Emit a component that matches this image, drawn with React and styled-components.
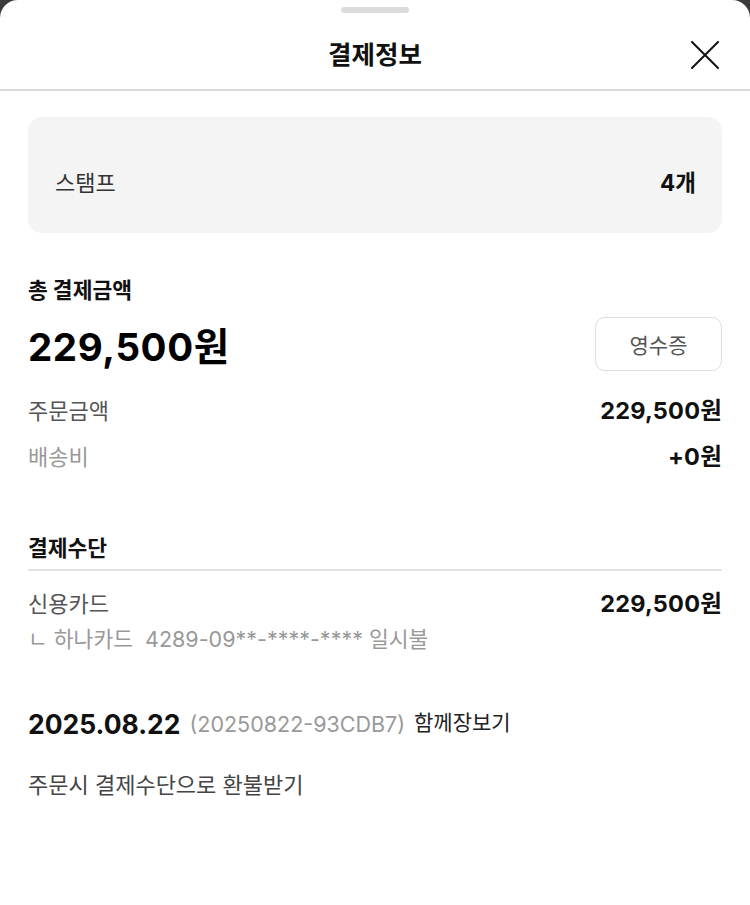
import React from "react";
import styled, { createGlobalStyle } from "styled-components";

const GlobalStyle = createGlobalStyle`
  html, body {
    margin: 0;
    padding: 0;
    background: #3b3b3b;
  }
  body {
    font-family: Inter, "Noto Sans CJK KR", sans-serif;
    color: #111;
  }
`;

function App() {
  return (
    <>
      <GlobalStyle />
      <Sheet>
        <Handle />
        <Header>
          <h1>결제정보</h1>
          <CloseButton aria-label="닫기">
            <svg viewBox="0 0 28 28" width="28" height="28">
              <path
                d="M1 1L27 27M27 1L1 27"
                fill="none"
                stroke="currentColor"
                strokeWidth="2"
                strokeLinecap="round"
              />
            </svg>
          </CloseButton>
        </Header>

        <Content>
          <StampBox>
            <span>스탬프</span>
            <strong>4개</strong>
          </StampBox>

          <SectionTitle $top={45}>총 결제금액</SectionTitle>
          <TotalRow>
            <TotalAmount>229,500원</TotalAmount>
            <ReceiptButton>영수증</ReceiptButton>
          </TotalRow>
          <InfoRow $top={24}>
            <Label>주문금액</Label>
            <Value>229,500원</Value>
          </InfoRow>
          <InfoRow $top={18}>
            <Label $light>배송비</Label>
            <Value>+0원</Value>
          </InfoRow>

          <SectionTitle $top={67}>결제수단</SectionTitle>
          <Divider />
          <InfoRow $top={17}>
            <Label>신용카드</Label>
            <Value>229,500원</Value>
          </InfoRow>
          <CardDetail>
            ㄴ 하나카드&nbsp;&nbsp;4289-09**-****-**** 일시불
          </CardDetail>

          <OrderRow>
            <OrderDate>2025.08.22</OrderDate>
            <OrderNumber>(20250822-93CDB7)</OrderNumber>
            <OrderTag>함께장보기</OrderTag>
          </OrderRow>
          <RefundNote>주문시 결제수단으로 환불받기</RefundNote>
        </Content>
      </Sheet>
    </>
  );
}

const Sheet = styled.div`
  min-height: 905px;
  background: #fff;
  border-radius: 18px 18px 0 0;
  display: flex;
  flex-direction: column;
`;

const Handle = styled.div`
  width: 68px;
  height: 6px;
  margin: 7px auto 0;
  border-radius: 3px;
  background: #dcdcdc;
`;

const Header = styled.div`
  position: relative;
  height: 77px;
  display: flex;
  align-items: center;
  justify-content: center;
  border-bottom: 2px solid #d8dbdd;
  margin-top: -1px;

  h1 {
    margin: 0;
    font-size: 25.5px;
    font-weight: 700;
    line-height: 30px;
    color: #111;
    padding-top: 9px;
  }
`;

const CloseButton = styled.button`
  position: absolute;
  right: 31px;
  top: 29px;
  padding: 0;
  border: none;
  background: none;
  color: #111;
  display: flex;
`;

const Content = styled.div`
  padding: 26px 28px 40px;
  display: flex;
  flex-direction: column;
`;

const StampBox = styled.div`
  height: 116px;
  box-sizing: border-box;
  border-radius: 14px;
  background: #f4f4f4;
  display: flex;
  align-items: center;
  justify-content: space-between;
  padding: 12px 26px 0 27px;

  span {
    font-size: 22px;
    color: #333;
  }
  strong {
    font-size: 22.5px;
    font-weight: 700;
    color: #111;
  }
`;

const SectionTitle = styled.div`
  margin-top: ${(p) => p.$top}px;
  font-size: 21.5px;
  font-weight: 700;
  line-height: 24px;
  color: #111;
`;

const TotalRow = styled.div`
  margin-top: 15px;
  height: 54px;
  display: flex;
  align-items: center;
  justify-content: space-between;
`;

const TotalAmount = styled.div`
  font-size: 38.5px;
  font-weight: 700;
  letter-spacing: 0.6px;
  color: #000;
`;

const ReceiptButton = styled.button`
  width: 127px;
  height: 54px;
  border: 1.5px solid #dedede;
  border-radius: 10px;
  background: #fff;
  font-family: inherit;
  font-size: 21px;
  color: #555;
`;

const InfoRow = styled.div`
  margin-top: ${(p) => p.$top}px;
  height: 28px;
  display: flex;
  align-items: center;
  justify-content: space-between;
`;

const Label = styled.span`
  font-size: 22px;
  color: ${(p) => (p.$light ? "#999" : "#555")};
`;

const Value = styled.span`
  font-size: 23.5px;
  font-weight: 700;
  letter-spacing: 0.2px;
  color: #111;
`;

const Divider = styled.div`
  margin-top: 9px;
  height: 1.5px;
  background: #e4e4e4;
`;

const CardDetail = styled.div`
  margin-top: 9px;
  line-height: 28px;
  font-size: 21.5px;
  color: #999;
`;

const OrderRow = styled.div`
  margin-top: 56px;
  height: 30px;
  display: flex;
  align-items: center;
  gap: 9px;
`;

const OrderDate = styled.span`
  font-size: 26.5px;
  font-weight: 700;
  color: #111;
`;

const OrderNumber = styled.span`
  font-size: 21.5px;
  color: #999;
`;

const OrderTag = styled.span`
  font-size: 21px;
  color: #222;
  margin-top: -5px;
`;

const RefundNote = styled.div`
  margin-top: 32px;
  line-height: 28px;
  font-size: 22px;
  color: #444;
`;

export default App;
